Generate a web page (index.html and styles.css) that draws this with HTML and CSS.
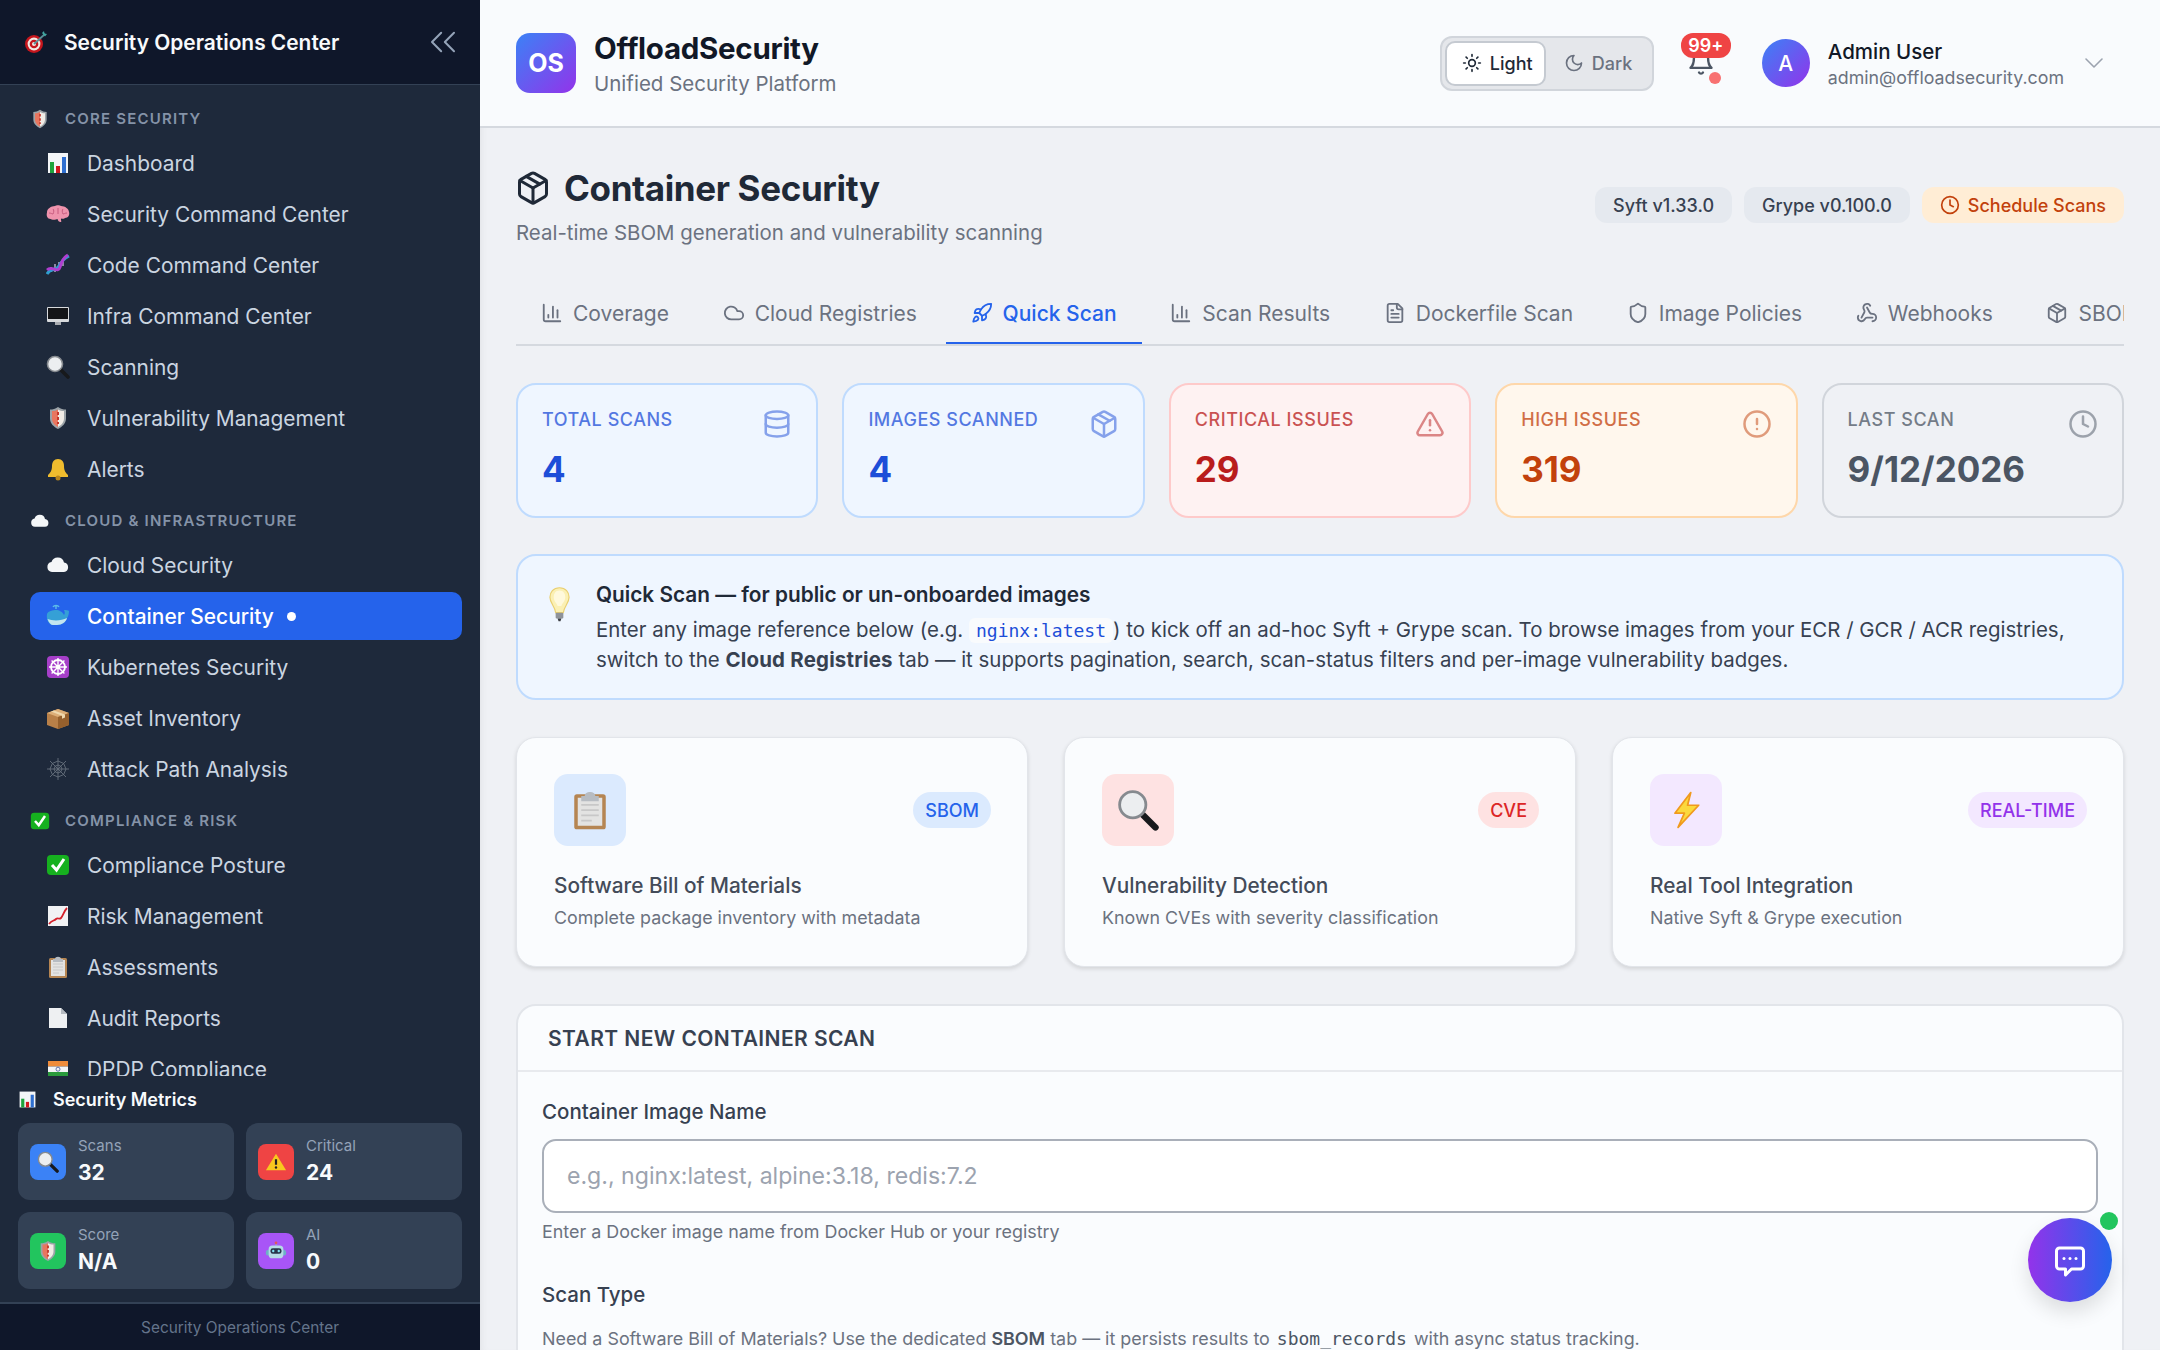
FILE: index.html
```html
<!DOCTYPE html>
<html lang="en">
<head>
  <meta charset="UTF-8" />
  <title>Container Security - OffloadSecurity</title>
  <link rel="stylesheet" href="styles.css">
</head>
<body>

<!-- emoji style pictures, reused through <use> -->
<svg class="sprites" aria-hidden="true">
  <symbol id="e-target" viewBox="0 0 24 24">
    <circle cx="10" cy="14" r="9" fill="#c5161d"/><circle cx="10" cy="14" r="6.4" fill="#f3e9e4"/><circle cx="10" cy="14" r="4.3" fill="#c5161d"/><circle cx="10" cy="14" r="2" fill="#f3e9e4"/>
    <path d="M10 14 21 4" stroke="#5b8f96" stroke-width="1.8"/><path d="m18 3 2-2 .5 2.5L23 4l-2 2.5z" fill="#3fa7a0"/>
  </symbol>
  <symbol id="e-shield" viewBox="0 0 24 24">
    <path d="M12 1c3 2 5 2.500 8 2.500v9c0 5-4 8.500-8 10.500-4-2-8-5.500-8-10.500v-9c3 0 5-.5 8-2.500z" fill="#9ca3a8"/>
    <path d="M6 5c2.500 0 4-.5 6-1.500V21c-3-1.500-6-4.500-6-8.500z" fill="#e8765f"/><path d="M12 3.500c2 1 3.500 1.500 6 1.500v7.500c0 4-3 7-6 8.500z" fill="#f1ece6"/>
    <path d="M12 6v12" stroke="#c5372c" stroke-width="2" stroke-dasharray="3 2"/>
  </symbol>
  <symbol id="e-bars" viewBox="0 0 24 24">
    <rect x="2" y="2" width="20" height="20" fill="#f3f5f7"/><rect x="4" y="11" width="4" height="11" fill="#1fa33c"/><rect x="10" y="15" width="4" height="7" fill="#d0181f"/><rect x="16" y="6" width="4" height="16" fill="#2f6fd0"/>
  </symbol>
  <symbol id="e-brain" viewBox="0 0 24 24">
    <path d="M1 10c0-3 4-6 8-6 1-1 5-1 6 0 4 0 8 3 8 6 1 3-1 6-4 6-1 1-3 1-4 .5-.5 1.500 1 3 0 3.500-1.500.5-3-1-3.500-3-1.500 1-6 1-7 0-3 0-4.500-3-3.500-6.500z" fill="#ef93ad"/>
    <path d="M7 7c1 1 1 3 0 5M12 6v6M17 7c-1 1-1 3 0 5M3 11c2 0 3 1 4 1M21 11c-2 0-3 1-4 1" stroke="#c75b7e" stroke-width="1" fill="none"/>
  </symbol>
  <symbol id="e-dna" viewBox="0 0 24 24">
    <path d="M5 14v5M9 11v8M13 9v8M17 6v7" stroke="#d9c6ea" stroke-width="1.200"/>
    <path d="M1 21c4-7 9-2 12-8S19 5 23 3" stroke="#2f9fd0" stroke-width="3" fill="none"/><path d="M1 17c5-5 11 4 13-3s4-10 8-12" stroke="#b03ed0" stroke-width="3" fill="none"/>
  </symbol>
  <symbol id="e-monitor" viewBox="0 0 24 24">
    <rect x="1" y="3" width="22" height="15" rx="1" fill="#d7d9dc"/><rect x="2" y="4" width="20" height="11" fill="#141518"/><rect x="9" y="18" width="6" height="3" fill="#a9acb1"/>
  </symbol>
  <symbol id="e-mag" viewBox="0 0 24 24">
    <path d="m14 14 8 8" stroke="#17191c" stroke-width="3.600" stroke-linecap="round"/><circle cx="9" cy="9" r="7.500" fill="#eceef0" stroke="#868a8f" stroke-width="1.600"/>
  </symbol>
  <symbol id="e-bell" viewBox="0 0 24 24">
    <path d="M12 2c4 0 6 3 6 7 0 5 2 7 4 9v2H2v-2c2-2 4-4 4-9 0-4 2-7 6-7z" fill="#f0bc2e"/><circle cx="12" cy="21" r="2.500" fill="#b9851b"/>
  </symbol>
  <symbol id="e-cloud" viewBox="0 0 24 24">
    <path d="M6 19a5 5 0 0 1-.5-9.900A6.500 6.500 0 0 1 18 9.500a4.800 4.800 0 0 1 0 9.500z" fill="#f4f6f8"/>
  </symbol>
  <symbol id="e-whale" viewBox="0 0 24 24">
    <path d="M1 10c1-3 6-4 9-4s7 2 8 5c1-1 1-3 0-5 2 0 4 0 5 1 0 3-1 6-2 7-1 4-5 7-10 7H7c-4 0-7-5-6-11z" fill="#35a0d6"/><path d="M1.500 15c5 2 14 2 19.500-1-1 4-5 7-10 7H7c-2 0-4-2-5.500-6z" fill="#c3e4f0"/>
    <path d="M10 5V2M7 3c1-2 5-2 6 0" stroke="#5cbbe8" stroke-width="1.400" fill="none"/>
  </symbol>
  <symbol id="e-wheel" viewBox="0 0 24 24">
    <rect x="1" y="1" width="22" height="22" rx="4" fill="#a63fc9"/><circle cx="12" cy="12" r="7" fill="none" stroke="#fff" stroke-width="1.800"/>
    <path d="M12 3v18M3 12h18M5.600 5.600l12.800 12.800M18.400 5.600 5.600 18.400" stroke="#fff" stroke-width="1.400"/><circle cx="12" cy="12" r="2" fill="#fff"/>
  </symbol>
  <symbol id="e-box" viewBox="0 0 24 24">
    <path d="M1 7 12 3l11 4v12l-11 4-11-4z" fill="#b98048"/><path d="M1 7l11 4 11-4-11-4z" fill="#dcae78"/><path d="M12 11v12l11-4V7z" fill="#96602d"/><path d="m5 5.500 11 4.200v3l3-1.200V8.500L8 4.400z" fill="#efd8ad"/>
  </symbol>
  <symbol id="e-web" viewBox="0 0 24 24">
    <g fill="none" stroke="#67707d" stroke-width=".9"><path d="M12 1v22M1 12h22M4 4l16 16M20 4 4 20"/><path d="m12 4 5.600 2.400L20 12l-2.400 5.600L12 20l-5.600-2.400L4 12l2.400-5.600z"/><path d="m12 8 2.800 1.200L16 12l-1.200 2.800L12 16l-2.800-1.200L8 12l1.200-2.800z"/></g>
  </symbol>
  <symbol id="e-check" viewBox="0 0 24 24">
    <rect x="1" y="2" width="22" height="20" rx="4" fill="#16b01f"/><path d="m6 12 4.500 5L18 6" stroke="#fff" stroke-width="3" fill="none"/>
  </symbol>
  <symbol id="e-trend" viewBox="0 0 24 24">
    <rect x="2" y="2" width="20" height="20" fill="#f1f2f4"/><path d="M3 20c3-4 5-3 7-5s3 1 5-1 3-7 6-10" stroke="#d4202a" stroke-width="1.800" fill="none"/>
  </symbol>
  <symbol id="e-clip" viewBox="0 0 24 24">
    <rect x="3" y="3" width="18" height="20" rx="1.500" fill="#b58552"/><rect x="5" y="5" width="14" height="16" fill="#e3e3e2"/><path d="M9 4c0-3 6-3 6 0h2v3H7V4z" fill="#b7bcc2"/>
    <path d="M7 9h10M7 12h10M7 15h10M7 18h6" stroke="#c8c8c8" stroke-width="1"/>
  </symbol>
  <symbol id="e-page" viewBox="0 0 24 24">
    <path d="M3 2h12l6 6v14H3z" fill="#eef0f2"/><path d="m15 2 6 6h-6z" fill="#b6bbc1"/>
  </symbol>
  <symbol id="e-flag" viewBox="0 0 24 24">
    <rect x="2" y="4" width="20" height="5.500" fill="#f08c3a"/><rect x="2" y="9.500" width="20" height="5.500" fill="#f4f5f6"/><rect x="2" y="15" width="20" height="5.500" fill="#2a9a3c"/><circle cx="12" cy="12.200" r="2" fill="none" stroke="#2a3f8f" stroke-width=".7"/>
  </symbol>
  <symbol id="e-warn" viewBox="0 0 24 24">
    <path d="M12 3 23 21H1z" fill="#f8c81e"/><path d="M12 9v6" stroke="#222" stroke-width="2.400"/><circle cx="12" cy="18" r="1.300" fill="#222"/>
  </symbol>
  <symbol id="e-robot" viewBox="0 0 24 24">
    <path d="M12 3v3" stroke="#9aa5ad" stroke-width="1.500"/><circle cx="12" cy="3" r="1.500" fill="#e05757"/><rect x="1" y="11" width="22" height="6" rx="2" fill="#6cb1c7"/><rect x="4" y="6" width="16" height="14" rx="4" fill="#b5dbe6"/>
    <rect x="6" y="9" width="12" height="6" rx="2.500" fill="#27364a"/><circle cx="9" cy="12" r="1.300" fill="#7fe3f2"/><circle cx="15" cy="12" r="1.300" fill="#7fe3f2"/>
  </symbol>
  <symbol id="e-bulb" viewBox="0 0 24 36">
    <path d="M12 1C5.500 1 2 6 2 11c0 6 5 9 6 16h8c1-7 6-10 6-16 0-5-3.500-10-10-10z" fill="#fbf0b4" stroke="#e9cf70" stroke-width="1.200"/>
    <path d="M12 4c-4 0-6 3-6 7s3 6 4 9h4c1-3 4-5 4-9s-2-7-6-7z" fill="#fff9dc"/><rect x="8" y="27" width="8" height="6" rx="1" fill="#8f9399"/><path d="M10 33h4l-1 3h-2z" fill="#3b3e43"/>
  </symbol>
  <symbol id="e-bolt" viewBox="0 0 24 24">
    <path d="M15 1 5 14h6L7 23 20 9h-7z" fill="#fbd93c" stroke="#f09a1e" stroke-width="1.100" stroke-linejoin="round"/>
  </symbol>
</svg>

<div class="app">

  <aside class="sidebar">
    <div class="side-head">
      <svg class="emoji emoji-head"><use href="#e-target"/></svg>
      <span class="side-title">Security Operations Center</span>
      <svg class="ico side-collapse" viewBox="0 0 24 24"><path d="m11 17-5-5 5-5"/><path d="m18 17-5-5 5-5"/></svg>
    </div>

    <nav class="side-nav">
      <div class="nav-section"><svg class="emoji"><use href="#e-shield"/></svg>Core Security</div>
      <a class="nav-item"><svg class="emoji"><use href="#e-bars"/></svg>Dashboard</a>
      <a class="nav-item"><svg class="emoji"><use href="#e-brain"/></svg>Security Command Center</a>
      <a class="nav-item"><svg class="emoji"><use href="#e-dna"/></svg>Code Command Center</a>
      <a class="nav-item"><svg class="emoji"><use href="#e-monitor"/></svg>Infra Command Center</a>
      <a class="nav-item"><svg class="emoji"><use href="#e-mag"/></svg>Scanning</a>
      <a class="nav-item"><svg class="emoji"><use href="#e-shield"/></svg>Vulnerability Management</a>
      <a class="nav-item"><svg class="emoji"><use href="#e-bell"/></svg>Alerts</a>

      <div class="nav-section"><svg class="emoji"><use href="#e-cloud"/></svg>Cloud &amp; Infrastructure</div>
      <a class="nav-item"><svg class="emoji"><use href="#e-cloud"/></svg>Cloud Security</a>
      <a class="nav-item active"><svg class="emoji"><use href="#e-whale"/></svg>Container Security<span class="active-dot"></span></a>
      <a class="nav-item"><svg class="emoji"><use href="#e-wheel"/></svg>Kubernetes Security</a>
      <a class="nav-item"><svg class="emoji"><use href="#e-box"/></svg>Asset Inventory</a>
      <a class="nav-item"><svg class="emoji"><use href="#e-web"/></svg>Attack Path Analysis</a>

      <div class="nav-section"><svg class="emoji"><use href="#e-check"/></svg>Compliance &amp; Risk</div>
      <a class="nav-item"><svg class="emoji"><use href="#e-check"/></svg>Compliance Posture</a>
      <a class="nav-item"><svg class="emoji"><use href="#e-trend"/></svg>Risk Management</a>
      <a class="nav-item"><svg class="emoji"><use href="#e-clip"/></svg>Assessments</a>
      <a class="nav-item"><svg class="emoji"><use href="#e-page"/></svg>Audit Reports</a>
      <a class="nav-item"><svg class="emoji"><use href="#e-flag"/></svg>DPDP Compliance</a>
    </nav>

    <div class="metrics">
      <div class="metrics-title"><svg class="emoji"><use href="#e-bars"/></svg>Security Metrics</div>
      <div class="metrics-grid">
        <div class="metric">
          <span class="metric-icon m-blue"><svg class="emoji"><use href="#e-mag"/></svg></span>
          <div><div class="metric-label">Scans</div><div class="metric-value">32</div></div>
        </div>
        <div class="metric">
          <span class="metric-icon m-red"><svg class="emoji"><use href="#e-warn"/></svg></span>
          <div><div class="metric-label">Critical</div><div class="metric-value">24</div></div>
        </div>
        <div class="metric">
          <span class="metric-icon m-green"><svg class="emoji"><use href="#e-shield"/></svg></span>
          <div><div class="metric-label">Score</div><div class="metric-value">N/A</div></div>
        </div>
        <div class="metric">
          <span class="metric-icon m-purple"><svg class="emoji"><use href="#e-robot"/></svg></span>
          <div><div class="metric-label">AI</div><div class="metric-value">0</div></div>
        </div>
      </div>
    </div>

    <div class="side-foot">Security Operations Center</div>
  </aside>

  <div class="main">
    <header class="topbar">
      <div class="brand">
        <div class="brand-logo">OS</div>
        <div>
          <div class="brand-name">OffloadSecurity</div>
          <div class="brand-sub">Unified Security Platform</div>
        </div>
      </div>

      <div class="topbar-right">
        <div class="theme-toggle">
          <button class="theme-btn on">
            <svg class="ico" viewBox="0 0 24 24"><circle cx="12" cy="12" r="4"/><path d="M12 2v2"/><path d="M12 20v2"/><path d="m4.930 4.930 1.410 1.410"/><path d="m17.660 17.660 1.410 1.410"/><path d="M2 12h2"/><path d="M20 12h2"/><path d="m6.340 17.660-1.410 1.410"/><path d="m19.070 4.930-1.410 1.410"/></svg>
            Light
          </button>
          <button class="theme-btn">
            <svg class="ico" viewBox="0 0 24 24"><path d="M12 3a6 6 0 0 0 9 9 9 9 0 1 1-9-9Z"/></svg>
            Dark
          </button>
        </div>

        <div class="bell">
          <svg class="ico" viewBox="0 0 24 24"><path d="M6 8a6 6 0 0 1 12 0c0 7 3 9 3 9H3s3-2 3-9"/><path d="M10.300 21a1.940 1.940 0 0 0 3.400 0"/></svg>
          <span class="bell-count">99+</span>
          <span class="bell-dot"></span>
        </div>

        <div class="user">
          <div class="avatar">A</div>
          <div>
            <div class="user-name">Admin User</div>
            <div class="user-mail">admin@offloadsecurity.com</div>
          </div>
          <svg class="ico user-chevron" viewBox="0 0 24 24"><path d="m6 9 6 6 6-6"/></svg>
        </div>
      </div>
    </header>

    <main class="content">
      <div class="page-head">
        <div>
          <h1>
            <svg class="ico" viewBox="0 0 24 24"><path d="M11 21.730a2 2 0 0 0 2 0l7-4A2 2 0 0 0 21 16V8a2 2 0 0 0-1-1.730l-7-4a2 2 0 0 0-2 0l-7 4A2 2 0 0 0 3 8v8a2 2 0 0 0 1 1.730z"/><path d="M12 22V12"/><path d="m3.300 7 8.700 5 8.700-5"/><path d="m7.500 4.270 9 5.150"/></svg>
            Container Security
          </h1>
          <p class="page-sub">Real-time SBOM generation and vulnerability scanning</p>
        </div>
        <div class="head-badges">
          <span class="chip">Syft v1.33.0</span>
          <span class="chip">Grype v0.100.0</span>
          <span class="chip chip-orange">
            <svg class="ico" viewBox="0 0 24 24"><circle cx="12" cy="12" r="10"/><path d="M12 6v6l4 2"/></svg>
            Schedule Scans
          </span>
        </div>
      </div>

      <div class="tabs">
        <a class="tab"><svg class="ico" viewBox="0 0 24 24"><path d="M3 3v16a2 2 0 0 0 2 2h16"/><path d="M18 17V9"/><path d="M13 17V5"/><path d="M8 17v-3"/></svg>Coverage</a>
        <a class="tab"><svg class="ico" viewBox="0 0 24 24"><path d="M17.500 19H9a7 7 0 1 1 6.710-9h1.790a4.500 4.500 0 1 1 0 9Z"/></svg>Cloud Registries</a>
        <a class="tab active"><svg class="ico" viewBox="0 0 24 24"><path d="M4.500 16.500c-1.500 1.260-2 5-2 5s3.740-.5 5-2c.71-.84.7-2.130-.09-2.910a2.180 2.180 0 0 0-2.910-.09z"/><path d="m12 15-3-3a22 22 0 0 1 2-3.950A12.880 12.880 0 0 1 22 2c0 2.720-.78 7.500-6 11a22.350 22.350 0 0 1-4 2z"/><path d="M9 12H4s.55-3.030 2-4c1.620-1.080 5 0 5 0"/><path d="M12 15v5s3.030-.55 4-2c1.080-1.620 0-5 0-5"/></svg>Quick Scan</a>
        <a class="tab"><svg class="ico" viewBox="0 0 24 24"><path d="M3 3v16a2 2 0 0 0 2 2h16"/><path d="M18 17V9"/><path d="M13 17V5"/><path d="M8 17v-3"/></svg>Scan Results</a>
        <a class="tab"><svg class="ico" viewBox="0 0 24 24"><path d="M15 2H6a2 2 0 0 0-2 2v16a2 2 0 0 0 2 2h12a2 2 0 0 0 2-2V7Z"/><path d="M14 2v4a2 2 0 0 0 2 2h4"/><path d="M10 9H8"/><path d="M16 13H8"/><path d="M16 17H8"/></svg>Dockerfile Scan</a>
        <a class="tab"><svg class="ico" viewBox="0 0 24 24"><path d="M20 13c0 5-3.500 7.500-7.660 8.950a1 1 0 0 1-.67-.01C7.500 20.500 4 18 4 13V6a1 1 0 0 1 1-1c2 0 4.500-1.200 6.240-2.720a1.170 1.170 0 0 1 1.520 0C14.510 3.810 17 5 19 5a1 1 0 0 1 1 1z"/></svg>Image Policies</a>
        <a class="tab"><svg class="ico" viewBox="0 0 24 24"><path d="M18 16.980h-5.990c-1.100 0-1.950.94-2.480 1.900A4 4 0 0 1 2 17c.01-.7.2-1.400.57-2"/><path d="m6 17 3.130-5.780c.53-.97.1-2.180-.5-3.100a4 4 0 1 1 6.890-4.060"/><path d="m12 6 3.130 5.730C15.660 12.700 16.900 13 18 13a4 4 0 0 1 0 8"/></svg>Webhooks</a>
        <a class="tab"><svg class="ico" viewBox="0 0 24 24"><path d="M11 21.730a2 2 0 0 0 2 0l7-4A2 2 0 0 0 21 16V8a2 2 0 0 0-1-1.730l-7-4a2 2 0 0 0-2 0l-7 4A2 2 0 0 0 3 8v8a2 2 0 0 0 1 1.730z"/><path d="M12 22V12"/><path d="m3.300 7 8.700 5 8.700-5"/><path d="m7.500 4.270 9 5.150"/></svg>SBOM</a>
      </div>

      <div class="stats">
        <div class="stat stat-blue">
          <div class="stat-top"><span class="stat-label">Total Scans</span>
            <svg class="ico" viewBox="0 0 24 24"><ellipse cx="12" cy="5" rx="9" ry="3"/><path d="M3 5V19A9 3 0 0 0 21 19V5"/><path d="M3 12A9 3 0 0 0 21 12"/></svg></div>
          <div class="stat-value">4</div>
        </div>
        <div class="stat stat-blue">
          <div class="stat-top"><span class="stat-label">Images Scanned</span>
            <svg class="ico" viewBox="0 0 24 24"><path d="M11 21.730a2 2 0 0 0 2 0l7-4A2 2 0 0 0 21 16V8a2 2 0 0 0-1-1.730l-7-4a2 2 0 0 0-2 0l-7 4A2 2 0 0 0 3 8v8a2 2 0 0 0 1 1.730z"/><path d="M12 22V12"/><path d="m3.300 7 8.700 5 8.700-5"/><path d="m7.500 4.270 9 5.150"/></svg></div>
          <div class="stat-value">4</div>
        </div>
        <div class="stat stat-red">
          <div class="stat-top"><span class="stat-label">Critical Issues</span>
            <svg class="ico" viewBox="0 0 24 24"><path d="m21.730 18-8-14a2 2 0 0 0-3.480 0l-8 14A2 2 0 0 0 4 21h16a2 2 0 0 0 1.730-3"/><path d="M12 9v4"/><path d="M12 17h.01"/></svg></div>
          <div class="stat-value">29</div>
        </div>
        <div class="stat stat-orange">
          <div class="stat-top"><span class="stat-label">High Issues</span>
            <svg class="ico" viewBox="0 0 24 24"><circle cx="12" cy="12" r="10"/><path d="M12 8v4"/><path d="M12 16h.01"/></svg></div>
          <div class="stat-value">319</div>
        </div>
        <div class="stat stat-gray">
          <div class="stat-top"><span class="stat-label">Last Scan</span>
            <svg class="ico" viewBox="0 0 24 24"><circle cx="12" cy="12" r="10"/><path d="M12 6v6l4 2"/></svg></div>
          <div class="stat-value">9/12/2026</div>
        </div>
      </div>

      <div class="info">
        <svg class="info-bulb"><use href="#e-bulb"/></svg>
        <div>
          <div class="info-title">Quick Scan — for public or un-onboarded images</div>
          <p class="info-text">Enter any image reference below (e.g. <code>nginx:latest</code>) to kick off an ad-hoc Syft + Grype scan. To browse images from your ECR / GCR / ACR registries, switch to the <b>Cloud Registries</b> tab — it supports pagination, search, scan-status filters and per-image vulnerability badges.</p>
        </div>
      </div>

      <div class="features">
        <div class="feature">
          <div class="feature-top">
            <span class="feature-icon f-blue"><svg class="emoji"><use href="#e-clip"/></svg></span>
            <span class="tag f-blue">SBOM</span>
          </div>
          <div class="feature-name">Software Bill of Materials</div>
          <div class="feature-desc">Complete package inventory with metadata</div>
        </div>
        <div class="feature">
          <div class="feature-top">
            <span class="feature-icon f-red"><svg class="emoji"><use href="#e-mag"/></svg></span>
            <span class="tag f-red">CVE</span>
          </div>
          <div class="feature-name">Vulnerability Detection</div>
          <div class="feature-desc">Known CVEs with severity classification</div>
        </div>
        <div class="feature">
          <div class="feature-top">
            <span class="feature-icon f-purple"><svg class="emoji"><use href="#e-bolt"/></svg></span>
            <span class="tag f-purple">REAL-TIME</span>
          </div>
          <div class="feature-name">Real Tool Integration</div>
          <div class="feature-desc">Native Syft &amp; Grype execution</div>
        </div>
      </div>

      <section class="scan-form">
        <div class="scan-head">Start New Container Scan</div>
        <div class="scan-body">
          <label class="field-label" for="image">Container Image Name</label>
          <input id="image" class="field-input" type="text" placeholder="e.g., nginx:latest, alpine:3.18, redis:7.2">
          <p class="field-help">Enter a Docker image name from Docker Hub or your registry</p>
          <div class="field-label scan-type">Scan Type</div>
          <p class="field-help">Need a Software Bill of Materials? Use the dedicated <b>SBOM</b> tab — it persists results to <code>sbom_records</code> with async status tracking.</p>
        </div>
      </section>
    </main>
  </div>
</div>

<button class="chat-btn">
  <svg class="ico" viewBox="0 0 24 24"><path d="M5 4h14a2 2 0 0 1 2 2v10a2 2 0 0 1-2 2h-6l-4 4v-4H5a2 2 0 0 1-2-2V6a2 2 0 0 1 2-2z"/><path d="M8 11h.01"/><path d="M12 11h.01"/><path d="M16 11h.01"/></svg>
  <span class="chat-dot"></span>
</button>

</body>
</html>
```

FILE: styles.css
```css
* {
    box-sizing: border-box;
}

html, body {
    margin: 0;
    height: 100%;
    overflow: hidden;
}

body {
    font-family: Inter, "Noto Sans", sans-serif;
    background-color: #eff1f5;
    color: #1f2937;
}

.sprites {
    position: absolute;
    width: 0;
    height: 0;
}

.ico {
    fill: none;
    stroke: currentColor;
    stroke-width: 2;
    stroke-linecap: round;
    stroke-linejoin: round;
    flex-shrink: 0;
}

.emoji {
    width: 24px;
    height: 24px;
    flex-shrink: 0;
}

.app {
    display: flex;
    height: 100vh;
}

/* sidebar */
.sidebar {
    width: 480px;
    flex-shrink: 0;
    display: flex;
    flex-direction: column;
    background-color: #1e293b;
    color: #cbd5e1;
}

.side-head {
    height: 85px;
    flex-shrink: 0;
    display: flex;
    align-items: center;
    padding: 0 24px;
    background-color: #0f172a;
    border-bottom: 1px solid #334155;
}

.side-title {
    margin-left: 16px;
    font-size: 20.9px;
    font-weight: 600;
    color: #f8fafc;
}

.side-collapse {
    margin-left: auto;
    margin-right: -9px;
    width: 44px;
    height: 44px;
    color: #94a3b8;
    stroke-width: 1.1;
}

.side-nav {
    flex: 1;
    min-height: 0;
    overflow: hidden;
    padding: 9px 18px 0 30px;
}

.nav-section {
    height: 45px;
    padding-top: 4px;
    display: flex;
    align-items: center;
    gap: 15px;
    font-size: 15px;
    font-weight: 600;
    line-height: 20px;
    letter-spacing: 0.08em;
    text-transform: uppercase;
    color: #8593a8;
}

.nav-section .emoji {
    width: 20px;
    height: 20px;
}

.nav-item {
    display: flex;
    align-items: center;
    height: 48px;
    margin-bottom: 3px;
    padding-left: 16px;
    gap: 17px;
    border-radius: 10px;
    font-size: 20.9px;
    color: #cbd5e1;
}

.nav-item.active {
    background-color: #2563eb;
    color: #fff;
    font-weight: 500;
}

.active-dot {
    width: 9px;
    height: 9px;
    margin-left: -4px;
    border-radius: 50%;
    background-color: #fff;
}

.metrics {
    flex-shrink: 0;
    padding: 12px 18px 13px;
}

.metrics-title {
    display: flex;
    align-items: center;
    gap: 16px;
    height: 22px;
    margin-bottom: 13px;
    font-size: 18px;
    font-weight: 600;
    color: #f8fafc;
}

.metrics-title .emoji {
    width: 19px;
    height: 19px;
}

.metrics-grid {
    display: grid;
    grid-template-columns: 1fr 1fr;
    gap: 12px;
}

.metric {
    display: flex;
    align-items: center;
    gap: 12px;
    height: 77px;
    padding: 0 12px;
    border-radius: 12px;
    background-color: #334155;
}

.metric-icon {
    display: flex;
    align-items: center;
    justify-content: center;
    width: 36px;
    height: 36px;
    border-radius: 8px;
}

.metric-icon .emoji {
    width: 22px;
    height: 22px;
}

.m-blue { background-color: #3b82f6; }
.m-red { background-color: #ef4444; }
.m-green { background-color: #22c55e; }
.m-purple { background-color: #a855f7; }

.metric-label {
    margin-top: -1px;
    font-size: 15px;
    line-height: 20px;
    color: #94a3b8;
}

.metric-value {
    margin-top: 3px;
    font-size: 21px;
    line-height: 28px;
    font-weight: 700;
    color: #f8fafc;
}

.side-foot {
    height: 48px;
    flex-shrink: 0;
    display: flex;
    align-items: center;
    justify-content: center;
    background-color: #0f172a;
    border-top: 2px solid #334155;
    font-size: 15.4px;
    color: #64748b;
}

/* top bar */
.main {
    flex: 1;
    min-width: 0;
    display: flex;
    flex-direction: column;
    box-shadow: inset 6px 0 8px -6px rgba(0,0,0,0.08);
}

.topbar {
    height: 128px;
    flex-shrink: 0;
    display: flex;
    align-items: center;
    justify-content: space-between;
    padding: 0 36px;
    background-color: #f9fbfd;
    border-bottom: 2px solid #d5d9df;
}

.brand {
    display: flex;
    align-items: center;
    gap: 18px;
}

.brand-logo {
    width: 60px;
    height: 60px;
    display: flex;
    align-items: center;
    justify-content: center;
    border-radius: 14px;
    background: linear-gradient(135deg, #3b82f6, #9333ea);
    color: #fff;
    font-size: 25px;
    font-weight: 700;
}

.brand-name {
    font-size: 29.5px;
    line-height: 38px;
    font-weight: 700;
    letter-spacing: -0.01em;
    color: #111827;
}

.brand-sub {
    margin-top: 3px;
    font-size: 20.5px;
    line-height: 28px;
    color: #6b7280;
}

.topbar-right {
    display: flex;
    align-items: center;
}

.theme-toggle {
    display: flex;
    padding: 3px;
    gap: 2px;
    border: 2px solid #d1d5db;
    border-radius: 12px;
    background-color: #e5e7eb;
}

.theme-btn {
    display: flex;
    align-items: center;
    gap: 8px;
    width: 101px;
    height: 45px;
    padding: 0 0 0 16px;
    border: none;
    border-radius: 10px;
    background: none;
    font-family: inherit;
    font-size: 18px;
    font-weight: 500;
    color: #6b7280;
}

.theme-btn.on {
    background-color: #fff;
    border: 2px solid #c5cad1;
    padding-left: 15px;
    color: #1f2937;
}

.theme-btn .ico {
    width: 20px;
    height: 20px;
}

.bell {
    position: relative;
    width: 50px;
    height: 50px;
    margin-left: 27px;
    display: flex;
    align-items: flex-end;
    justify-content: center;
    color: #4b5563;
}

.bell .ico {
    width: 28px;
    height: 28px;
    margin-bottom: 12px;
    margin-right: 10px;
}

.bell-count {
    position: absolute;
    top: -5px;
    left: 0;
    width: 50px;
    height: 25px;
    border-radius: 12px;
    background-color: #ef4444;
    color: #fff;
    font-size: 18px;
    line-height: 25px;
    font-weight: 600;
    text-align: center;
}

.bell-dot {
    position: absolute;
    right: 10px;
    bottom: 4px;
    width: 12px;
    height: 12px;
    border-radius: 50%;
    background-color: #f87171;
}

.user {
    display: flex;
    align-items: center;
    margin-left: 31px;
    gap: 18px;
}

.avatar {
    width: 48px;
    height: 48px;
    display: flex;
    align-items: center;
    justify-content: center;
    border-radius: 50%;
    background: linear-gradient(135deg, #3b82f6, #9333ea);
    color: #fff;
    font-size: 21px;
    font-weight: 500;
}

.user-name {
    margin-top: 2px;
    font-size: 20.5px;
    line-height: 28px;
    font-weight: 500;
    color: #111827;
}

.user-mail {
    margin-top: -1px;
    font-size: 17.8px;
    line-height: 26px;
    color: #6b7280;
}

.user-chevron {
    width: 32px;
    height: 32px;
    margin-left: -4px;
    margin-right: 14px;
    color: #9ca3af;
    stroke-width: 1.2;
}

/* page */
.content {
    flex: 1;
    min-height: 0;
    overflow: hidden;
    padding: 38px 36px 0;
}

.page-head {
    display: flex;
    justify-content: space-between;
    align-items: flex-start;
}

h1 {
    display: flex;
    align-items: center;
    gap: 13px;
    margin: 0;
    font-size: 35px;
    line-height: 44px;
    font-weight: 700;
    letter-spacing: -0.01em;
    color: #1f2937;
}

h1 .ico {
    width: 36px;
    height: 36px;
    margin-left: -1px;
}

.page-sub {
    margin: 9px 0 0;
    font-size: 20.45px;
    line-height: 28px;
    color: #6b7280;
}

.head-badges {
    display: flex;
    gap: 12px;
    margin-top: 21px;
}

.chip {
    display: flex;
    align-items: center;
    gap: 8px;
    height: 36px;
    padding: 0 18px;
    border-radius: 12px;
    background-color: #e5e9ef;
    font-size: 18px;
    font-weight: 500;
    color: #374151;
}

.chip-orange {
    background-color: #ffedd5;
    color: #c2410c;
}

.chip-orange .ico {
    width: 20px;
    height: 20px;
}

.tabs {
    display: flex;
    gap: 3.7px;
    margin-top: 34px;
    border-bottom: 2px solid #d5d9df;
    overflow: hidden;
}

.tab {
    display: flex;
    align-items: center;
    gap: 10px;
    height: 63px;
    padding: 1px 25px 0;
    flex-shrink: 0;
    font-size: 21px;
    color: #6b7280;
}

.tab .ico {
    width: 22px;
    height: 22px;
}

.tab.active {
    color: #2563eb;
    font-weight: 500;
    box-shadow: inset 0 -2px 0 #2563eb;
}

.stats {
    display: grid;
    grid-template-columns: repeat(5, 1fr);
    gap: 24px;
    margin-top: 37px;
}

.stat {
    height: 135px;
    padding: 24px 24px 0;
    border: 2px solid;
    border-radius: 20px;
}

.stat-top {
    display: flex;
    justify-content: space-between;
    align-items: flex-start;
    height: 30px;
}

.stat-top .ico {
    width: 30px;
    height: 30px;
    opacity: 0.5;
}

.stat-label {
    font-size: 18px;
    line-height: 22px;
    font-weight: 500;
    letter-spacing: 0.03em;
    text-transform: uppercase;
    opacity: 0.75;
}

.stat-value {
    margin-top: 7px;
    font-size: 35px;
    line-height: 46px;
    font-weight: 700;
}

.stat-blue { background-color: #eff6ff; border-color: #bfdbfe; color: #1d4ed8; }
.stat-red { background-color: #fef2f2; border-color: #fecaca; color: #b91c1c; }
.stat-orange { background-color: #fff7ed; border-color: #fed7aa; color: #c2410c; }
.stat-gray { background-color: #eff1f5; border-color: #d1d5db; color: #4b5563; }

.info {
    display: flex;
    gap: 25px;
    height: 146px;
    margin-top: 36px;
    padding: 25px 30px 0;
    background-color: #eff6ff;
    border: 2px solid #bfdbfe;
    border-radius: 20px;
}

.info-bulb {
    width: 23px;
    height: 36px;
    margin-top: 5px;
    flex-shrink: 0;
}

.info-title {
    font-size: 20.8px;
    line-height: 28px;
    font-weight: 600;
    color: #1f2937;
}

.info-text {
    margin: 6px 0 0;
    font-size: 20.45px;
    line-height: 30px;
    color: #374151;
}

.info-text b {
    font-weight: 700;
    letter-spacing: 0.01em;
}

code {
    font-family: "DejaVu Sans Mono", "Liberation Mono", monospace;
    font-size: 18px;
}

.info-text code {
    display: inline-block;
    padding: 0 7px;
    line-height: 25px;
    border-radius: 6px;
    background-color: #f9fbfd;
    color: #1d4ed8;
}

.features {
    display: grid;
    grid-template-columns: repeat(3, 1fr);
    gap: 36px;
    margin-top: 37px;
}

.feature {
    height: 230px;
    padding: 36px 36px 0 37px;
    background-color: #fafcfe;
    border: 1px solid #e2e5ea;
    border-radius: 20px;
    box-shadow: 0 2px 4px rgba(0,0,0,0.12);
}

.feature-top {
    display: flex;
    justify-content: space-between;
    align-items: center;
}

.feature-icon {
    width: 72px;
    height: 72px;
    display: flex;
    align-items: center;
    justify-content: center;
    border-radius: 14px;
}

.feature-icon .emoji {
    width: 42px;
    height: 42px;
}

.feature-icon.f-purple .emoji {
    width: 38px;
    height: 38px;
}

.tag {
    height: 36px;
    display: flex;
    align-items: center;
    padding: 0 12px;
    border-radius: 18px;
    font-size: 18px;
    font-weight: 500;
}

.f-blue { background-color: #dbeafe; color: #2563eb; }
.f-red { background-color: #fee2e2; color: #dc2626; }
.f-purple { background-color: #f3e8ff; color: #9333ea; }

.feature-name {
    margin-top: 25px;
    font-size: 20.8px;
    line-height: 30px;
    font-weight: 500;
    color: #434b59;
}

.feature-desc {
    margin-top: 4px;
    font-size: 17.85px;
    line-height: 26px;
    color: #6b7280;
}

.scan-form {
    margin-top: 37px;
    background-color: #fafcfe;
    border: 2px solid #e2e5ea;
    border-radius: 20px 20px 0 0;
    height: 400px;
}

.scan-head {
    height: 66px;
    display: flex;
    align-items: center;
    padding: 0 30px;
    border-bottom: 2px solid #e8eaee;
    font-size: 21px;
    font-weight: 600;
    letter-spacing: 0.02em;
    text-transform: uppercase;
    color: #374151;
}

.scan-body {
    padding: 26px 24px 0;
}

.field-label {
    display: block;
    font-size: 20.5px;
    line-height: 28px;
    font-weight: 500;
    color: #374151;
}

.field-input {
    display: block;
    width: 100%;
    height: 74px;
    margin-top: 13px;
    padding: 0 23px;
    background-color: #fff;
    border: 2px solid #a9afb9;
    border-radius: 14px;
    outline: none;
    font-family: inherit;
    font-size: 23.1px;
}

.field-input::placeholder {
    color: #9ca3af;
}

.field-help {
    margin: 7px 0 0;
    font-size: 17.9px;
    line-height: 24px;
    color: #6b7280;
}

.field-help b {
    font-weight: 600;
    color: #4b5563;
}

.field-help code {
    margin: 0 2px;
    font-size: 18px;
    color: #4b5563;
}

.scan-type {
    margin-top: 37px;
    margin-bottom: 18px;
}

/* floating chat */
.chat-btn {
    position: fixed;
    right: 48px;
    bottom: 48px;
    width: 84px;
    height: 84px;
    display: flex;
    align-items: center;
    justify-content: center;
    padding: 0;
    border: none;
    border-radius: 50%;
    background: linear-gradient(90deg, #9333ea, #2563eb);
    box-shadow: 0 10px 20px rgba(0,0,0,0.12);
    color: #fff;
}

.chat-btn .ico {
    width: 36px;
    height: 36px;
}

.chat-dot {
    position: absolute;
    top: -6px;
    right: -6px;
    width: 18px;
    height: 18px;
    border-radius: 50%;
    background-color: #22c55e;
}
```
